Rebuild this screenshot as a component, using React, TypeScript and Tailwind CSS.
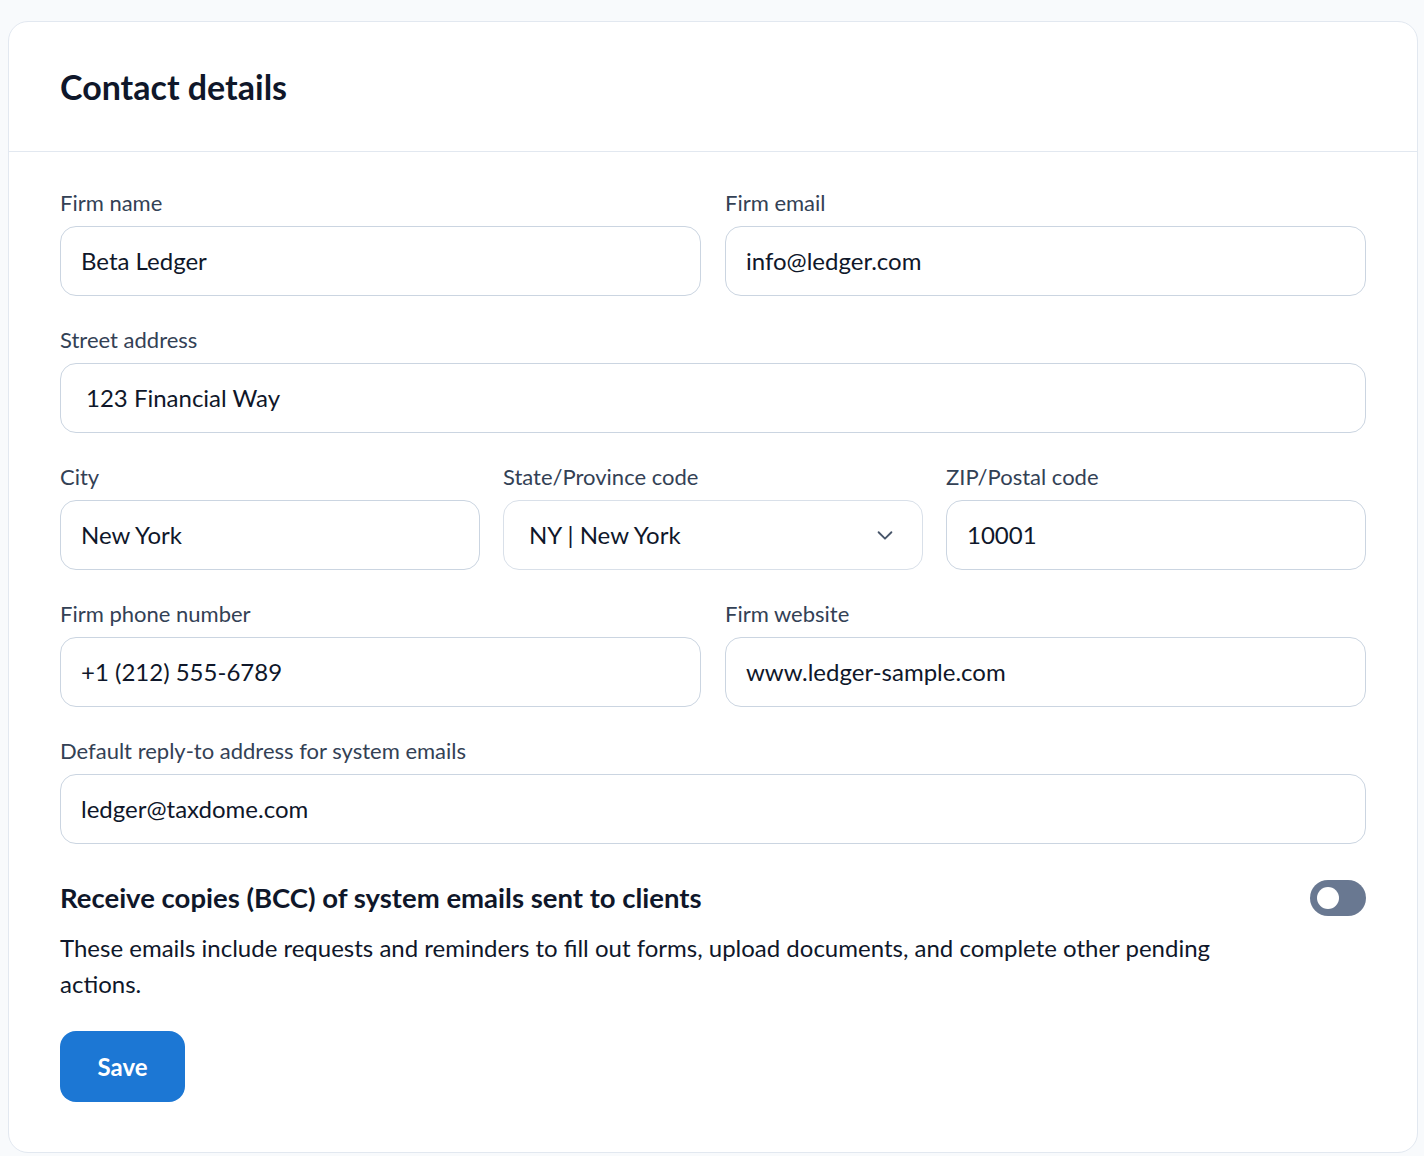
import React from "react";

const font = { fontFamily: "Lato, 'Noto Sans', sans-serif" };

function Field({ label, value, pl = "pl-[20px]", select = false }: { label: string; value: string; pl?: string; select?: boolean }) {
  return (
    <div className="flex flex-col">
      <div className="text-[22px] leading-[28px] text-[#334155]">{label}</div>
      <div className={`mt-[9px] flex h-[70px] items-center justify-between rounded-[16px] border ${select ? "border-[#d9e0e9]" : "border-[#cbd5e1]"} bg-white ${pl} pr-[26px]`}>
        <span className="text-[24px] text-[#0f172a]">{value}</span>
        {select && (
          <svg width="22" height="22" viewBox="0 0 24 24" fill="none" stroke="#475569" strokeWidth="2" strokeLinecap="round" strokeLinejoin="round">
            <path d="M5 9l7 7 7-7" />
          </svg>
        )}
      </div>
    </div>
  );
}

export default function App() {
  return (
    <div className="min-h-[1156px] bg-[#f8fafc] pl-2 pr-[6px] pt-[21px]" style={font}>
      <div className="w-[1410px] rounded-[20px] border border-[#e2e8f0] bg-white">
        <div className="border-b border-[#e2e8f0] px-[51px] pb-[44px] pt-[45px]">
          <h1 className="text-[34px] font-bold leading-[40px] text-[#0f172a]">Contact details</h1>
        </div>
        <div className="px-[51px] pb-[50px] pt-[37px]">
          <div className="flex flex-col gap-[30px]">
            <div className="grid grid-cols-2 gap-[24px]">
              <Field label="Firm name" value="Beta Ledger" />
              <Field label="Firm email" value="info@ledger.com" />
            </div>
            <Field label="Street address" value="123 Financial Way" pl="pl-[25px]" />
            <div className="grid grid-cols-3 gap-[23px]">
              <Field label="City" value="New York" />
              <Field label="State/Province code" value="NY | New York" pl="pl-[25px]" select />
              <Field label="ZIP/Postal code" value="10001" />
            </div>
            <div className="grid grid-cols-2 gap-[24px]">
              <Field label="Firm phone number" value="+1 (212) 555-6789" />
              <Field label="Firm website" value="www.ledger-sample.com" />
            </div>
            <Field label="Default reply-to address for system emails" value="ledger@taxdome.com" />
          </div>
          <div className="mt-[36px] flex items-start justify-between">
            <div className="text-[27.5px] font-bold leading-[36px] text-[#0f172a]">Receive copies (BCC) of system emails sent to clients</div>
            <div className="flex h-[36px] w-[56px] items-center rounded-full bg-[#697891] pl-[7px]">
              <div className="h-[22px] w-[22px] rounded-full bg-white" />
            </div>
          </div>
          <p className="mt-[14px] max-w-[1230px] text-[24px] leading-[36px] text-[#0f172a]">
            These emails include requests and reminders to fill out forms, upload documents, and complete other pending actions.
          </p>
          <button className="mt-[29px] flex h-[71px] w-[125px] items-center justify-center rounded-[16px] bg-[#1c77d4] text-[24px] font-bold text-white">
            Save
          </button>
        </div>
      </div>
    </div>
  );
}
